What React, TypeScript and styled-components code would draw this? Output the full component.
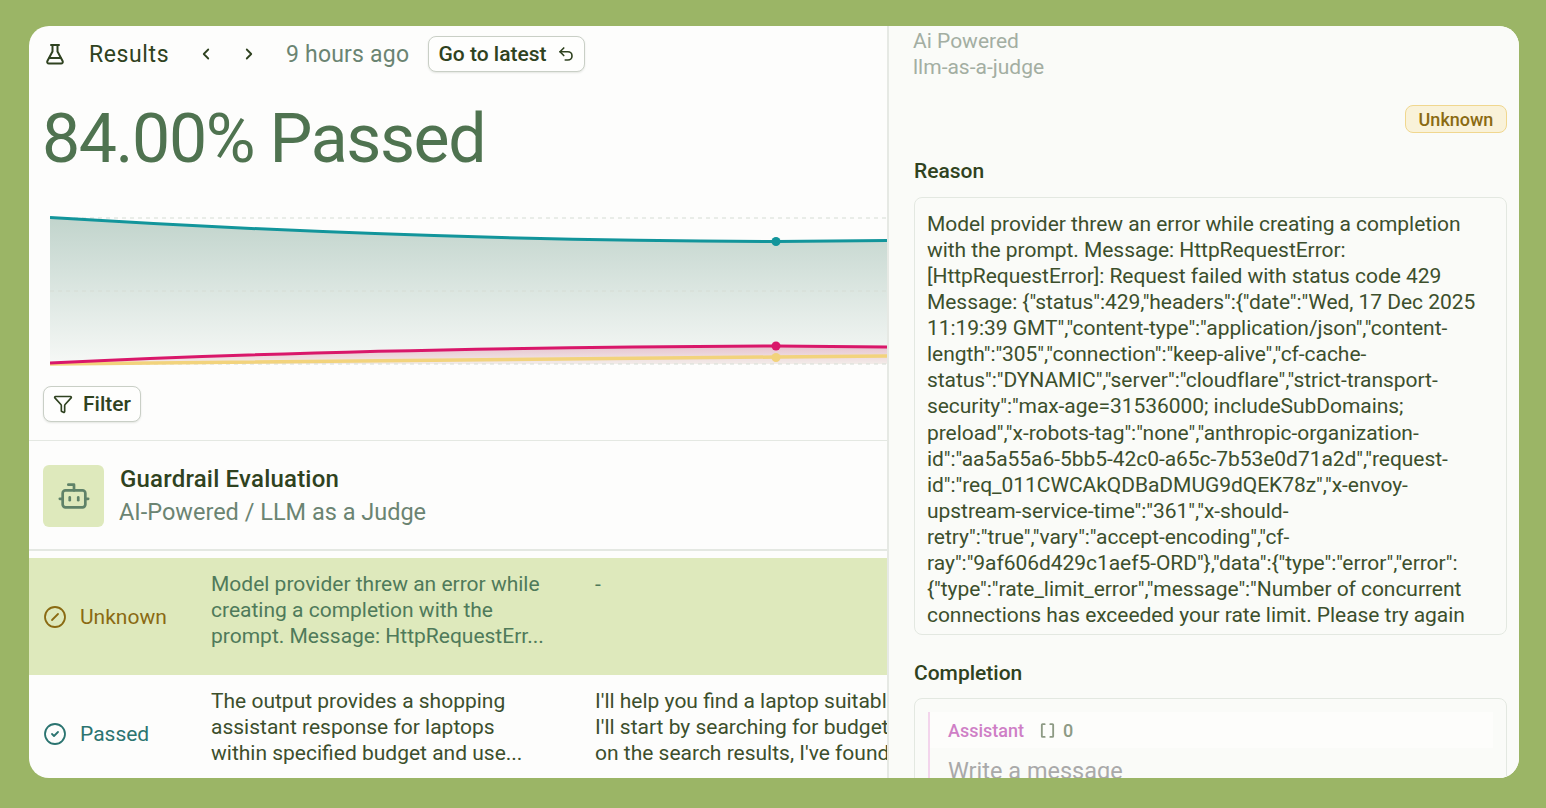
import React from 'react';
import styled, { createGlobalStyle } from 'styled-components';
import { Bot, Brackets, ChevronLeft, ChevronRight, CircleCheck, CircleSlash, Funnel, Undo2 } from 'lucide-react';

const REASON_LINES = [
  'Model provider threw an error while creating a completion',
  'with the prompt. Message: HttpRequestError:',
  '[HttpRequestError]: Request failed with status code 429',
  'Message: {"status":429,"headers":{"date":"Wed, 17 Dec 2025',
  '11:19:39 GMT","content-type":"application/json","content-',
  'length":"305","connection":"keep-alive","cf-cache-',
  'status":"DYNAMIC","server":"cloudflare","strict-transport-',
  'security":"max-age=31536000; includeSubDomains;',
  'preload","x-robots-tag":"none","anthropic-organization-',
  'id":"aa5a55a6-5bb5-42c0-a65c-7b53e0d71a2d","request-',
  'id":"req_011CWCAkQDBaDMUG9dQEK78z","x-envoy-',
  'upstream-service-time":"361","x-should-',
  'retry":"true","vary":"accept-encoding","cf-',
  'ray":"9af606d429c1aef5-ORD"},"data":{"type":"error","error":',
  '{"type":"rate_limit_error","message":"Number of concurrent',
  'connections has exceeded your rate limit. Please try again',
];

const FlaskIcon = () => (
  <svg width="24" height="24" viewBox="0 0 24 24" fill="none" stroke="currentColor" strokeWidth="2" strokeLinecap="round" strokeLinejoin="round">
    <path d="M8 3h8" />
    <path d="M9.500 3v6.500L4.400 19c-.7 1.300.2 2.500 1.500 2.500h12.200c1.300 0 2.200-1.200 1.500-2.500l-5.100-9.500V3" />
    <path d="M6.500 16h11" />
  </svg>
);

const Chart = () => (
  <svg width="838" height="170" viewBox="0 0 838 170">
    <defs>
      <linearGradient id="tealFill" x1="0" y1="0" x2="0" y2="1">
        <stop offset="0" stopColor="#c1d4cc" />
        <stop offset="1" stopColor="#f6f8f6" />
      </linearGradient>
      <linearGradient id="pinkFill" x1="0" y1="0" x2="0" y2="1">
        <stop offset="0" stopColor="#e6c3cf" />
        <stop offset="1" stopColor="#f3ece9" />
      </linearGradient>
    </defs>
    <path d="M0 12C250 28 500 36 726 36.500L838 35.500V159H0Z" fill="url(#tealFill)" />
    <path d="M0 158C240 146 500 142 726 141L838 142V159H0Z" fill="url(#pinkFill)" />
    <path d="M0 13H838M0 86H838M0 159H838" stroke="#d5dcd4" strokeDasharray="4 4" />
    <path d="M0 159C250 155 500 155 726 152L838 151" fill="none" stroke="#f2d37c" strokeWidth="3.500" />
    <path d="M0 158C240 146 500 142 726 141L838 142" fill="none" stroke="#d9176a" strokeWidth="3" />
    <path d="M0 12.500C250 28 500 36 726 36.500L838 35.500" fill="none" stroke="#12959b" strokeWidth="3" />
    <circle cx="726" cy="36.500" r="4.500" fill="#12959b" />
    <circle cx="726" cy="141" r="4.500" fill="#d9176a" />
    <circle cx="726" cy="152.500" r="4.500" fill="#f2d37c" />
  </svg>
);

const App = () => {
  return (
    <>
      <GlobalStyle />
      <Page>
        <Card>
          <LeftPanel>
            <TopBar>
              <FlaskSlot>
                <FlaskIcon />
              </FlaskSlot>
              <BarTitle>Results</BarTitle>
              <NavButton>
                <ChevronLeft size={18} strokeWidth={2.4} />
              </NavButton>
              <NavButton>
                <ChevronRight size={18} strokeWidth={2.4} />
              </NavButton>
              <TimeAgo>9 hours ago</TimeAgo>
              <OutlineButton $width={157}>
                Go to latest
                <Undo2 size={18} strokeWidth={2.2} />
              </OutlineButton>
            </TopBar>
            <Headline>84.00% Passed</Headline>
            <ChartWrap>
              <Chart />
            </ChartWrap>
            <FilterRow>
              <OutlineButton $width={98}>
                <Funnel size={20} strokeWidth={2} />
                Filter
              </OutlineButton>
            </FilterRow>
            <EvalHeader>
              <EvalIcon>
                <Bot size={34} strokeWidth={1.9} />
              </EvalIcon>
              <EvalText>
                <EvalTitle>Guardrail Evaluation</EvalTitle>
                <EvalSub>AI-Powered / LLM as a Judge</EvalSub>
              </EvalText>
            </EvalHeader>
            <Rows>
              <ResultRow $active>
                <StatusCell $color="#8a6a12">
                  <CircleSlash size={24} strokeWidth={1.8} />
                  Unknown
                </StatusCell>
                <TextCell $color="#4f7a5a">
                  <div>Model provider threw an error while</div>
                  <div>creating a completion with the</div>
                  <div>prompt. Message: HttpRequestErr...</div>
                </TextCell>
                <TextCell $color="#4f7a5a">
                  <div>-</div>
                </TextCell>
              </ResultRow>
              <ResultRow>
                <StatusCell $color="#2b7470">
                  <CircleCheck size={24} strokeWidth={1.8} />
                  Passed
                </StatusCell>
                <TextCell $color="#3c4f2c">
                  <div>The output provides a shopping</div>
                  <div>assistant response for laptops</div>
                  <div>within specified budget and use...</div>
                </TextCell>
                <TextCell $color="#3c4f2c">
                  <div>I'll help you find a laptop suitable for</div>
                  <div>I'll start by searching for budget laptops</div>
                  <div>on the search results, I've found some</div>
                </TextCell>
              </ResultRow>
            </Rows>
          </LeftPanel>
          <SidePanel>
            <Meta>Ai Powered</Meta>
            <Meta>llm-as-a-judge</Meta>
            <BadgeRow>
              <Badge>Unknown</Badge>
            </BadgeRow>
            <SectionLabel>Reason</SectionLabel>
            <ReasonBox>
              {REASON_LINES.map((line) => (
                <div key={line}>{line}</div>
              ))}
            </ReasonBox>
            <SectionLabel>Completion</SectionLabel>
            <CompletionBox>
              <Message>
                <MessageHead>
                  <Role>Assistant</Role>
                  <ToolCount>
                    <Brackets size={17} strokeWidth={2.6} />0
                  </ToolCount>
                </MessageHead>
                <Placeholder>Write a message</Placeholder>
              </Message>
            </CompletionBox>
          </SidePanel>
        </Card>
      </Page>
    </>
  );
};

export default App;

const GlobalStyle = createGlobalStyle`
  html, body {
    margin: 0;
    padding: 0;
    background: #9bb566;
  }
  * {
    box-sizing: border-box;
  }
`;

const Page = styled.div`
  width: 1546px;
  height: 808px;
  padding: 26px 27px 30px 29px;
  overflow: hidden;
  font-family: Roboto, 'Liberation Sans', sans-serif;
`;

const Card = styled.div`
  display: flex;
  width: 100%;
  height: 100%;
  overflow: hidden;
  border-radius: 20px;
  background: #fdfdfc;
`;

const LeftPanel = styled.div`
  flex: 0 0 858px;
  min-width: 0;
  overflow: hidden;
`;

const TopBar = styled.div`
  display: flex;
  align-items: center;
  height: 36px;
  margin-top: 10px;
  padding-left: 14px;
  color: #2f4220;
`;

const FlaskSlot = styled.div`
  display: flex;
  width: 46px;
`;

const BarTitle = styled.span`
  width: 108px;
  font-size: 23px;
  letter-spacing: 0.6px;
`;

const NavButton = styled.span`
  display: flex;
  width: 43px;
`;

const TimeAgo = styled.span`
  width: 145px;
  padding-left: 3px;
  color: #6b8472;
  font-size: 23px;
  letter-spacing: 0.2px;
  white-space: nowrap;
`;

const OutlineButton = styled.button<{ $width: number }>`
  display: flex;
  align-items: center;
  justify-content: center;
  gap: 10px;
  width: ${({ $width }) => $width}px;
  height: 36px;
  padding: 0;
  border: 1px solid #c9cfc6;
  border-radius: 8px;
  background: #fefefd;
  box-shadow: 0 1px 2px rgba(40, 60, 30, 0.12);
  color: #2f4220;
  font-family: inherit;
  font-size: 21px;
  font-weight: 500;
`;

const Headline = styled.h1`
  margin: 29px 0 0;
  padding-left: 13px;
  color: #4f7350;
  font-size: 68px;
  font-weight: 400;
  line-height: 76px;
  letter-spacing: -1.420px;
`;

const ChartWrap = styled.div`
  height: 170px;
  margin-top: 28px;
  padding-left: 21px;
`;

const FilterRow = styled.div`
  display: flex;
  height: 66px;
  padding: 11px 0 0 14px;
  border-bottom: 1px solid #e4e8e2;
`;

const EvalHeader = styled.div`
  display: flex;
  align-items: center;
  gap: 16px;
  height: 110px;
  padding: 1px 0 0 14px;
  border-bottom: 2px solid #e4e8e2;
`;

const EvalIcon = styled.div`
  display: flex;
  align-items: center;
  justify-content: center;
  width: 61px;
  height: 62px;
  border-radius: 6px;
  background: #dee9bc;
  color: #5f8268;
`;

const EvalText = styled.div`
  display: flex;
  flex-direction: column;
  gap: 5px;
`;

const EvalTitle = styled.div`
  color: #2f4220;
  font-size: 24px;
  font-weight: 500;
  letter-spacing: 0.2px;
`;

const EvalSub = styled.div`
  margin-left: -1px;
  color: #6b8472;
  font-size: 23.500px;
`;

const Rows = styled.div`
  margin-top: 7px;
`;

const ResultRow = styled.div<{ $active?: boolean }>`
  display: grid;
  grid-template-columns: 168px 384px 1fr;
  height: 117px;
  padding: 0 0 0 14px;
  background: ${({ $active }) => ($active ? '#dee9bc' : 'transparent')};
`;

const StatusCell = styled.div<{ $color: string }>`
  display: flex;
  align-items: center;
  gap: 13px;
  color: ${({ $color }) => $color};
  font-size: 21px;
`;

const TextCell = styled.div<{ $color: string }>`
  padding-top: 13px;
  color: ${({ $color }) => $color};
  font-size: 21px;
  line-height: 26px;
  white-space: nowrap;
`;

const SidePanel = styled.div`
  flex: 1;
  min-width: 0;
  padding: 2px 12px 0 25px;
  overflow: hidden;
  border-left: 2px solid #e6e9e4;
  background: #fafbf8;
`;

const Meta = styled.div`
  margin-left: -1px;
  color: #a3aea2;
  font-size: 21px;
  line-height: 26px;
`;

const BadgeRow = styled.div`
  display: flex;
  justify-content: flex-end;
  margin-top: 25px;
`;

const Badge = styled.span`
  display: flex;
  align-items: center;
  justify-content: center;
  width: 102px;
  height: 28px;
  border: 1.500px solid #f0d78f;
  border-radius: 8px;
  background: #f9f2d9;
  color: #8a6a12;
  font-size: 18px;
  font-weight: 500;
`;

const SectionLabel = styled.div`
  margin: 25px 0 12px;
  color: #2f4220;
  font-size: 21px;
  font-weight: 500;
  line-height: 26px;
`;

const ReasonBox = styled.div`
  height: 438px;
  margin-top: 13px;
  padding: 13px 12px;
  overflow: hidden;
  border: 1px solid #e3e8e1;
  border-radius: 8px;
  color: #3c4f2c;
  font-size: 21px;
  line-height: 26.070px;
  letter-spacing: -0.050px;
  white-space: nowrap;
`;

const CompletionBox = styled.div`
  height: 120px;
  padding: 13px 13px 0;
  border: 1px solid #e3e8e1;
  border-radius: 8px;
`;

const Message = styled.div`
  height: 120px;
  border-left: 2px solid #f3d5ec;
`;

const MessageHead = styled.div`
  display: flex;
  align-items: center;
  gap: 15px;
  height: 36px;
  padding-left: 18px;
  background: #fdfdfb;
`;

const Role = styled.span`
  color: #cf7fc6;
  font-size: 18px;
  font-weight: 500;
`;

const ToolCount = styled.span`
  display: flex;
  align-items: center;
  gap: 7px;
  color: #8d9a84;
  font-size: 18px;
  font-weight: 500;
`;

const Placeholder = styled.div`
  margin-top: 9px;
  padding-left: 18px;
  color: #a9a9a9;
  font-size: 23.500px;
  line-height: 28px;
`;
